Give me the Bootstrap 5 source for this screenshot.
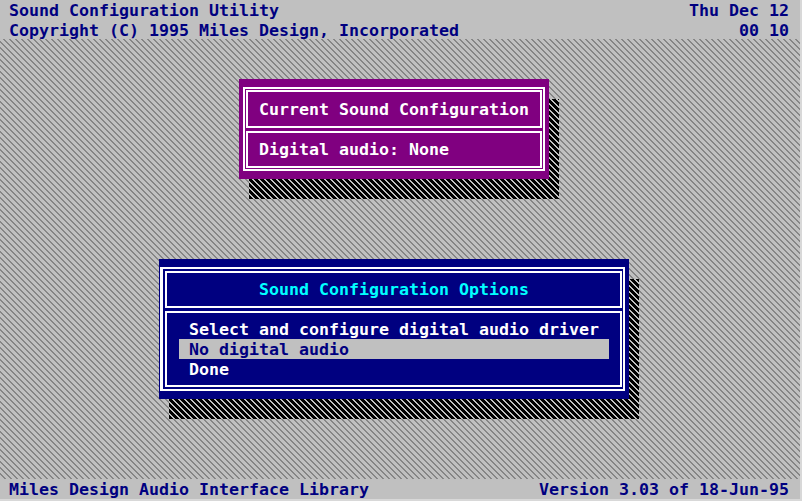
<!DOCTYPE html>
<html lang="en">
<head>
<meta charset="utf-8">
<title>Sound Configuration Utility</title>
<link rel="stylesheet" href="https://cdn.jsdelivr.net/npm/bootstrap@5.3.0/dist/css/bootstrap.min.css">
<style>
html,body{height:100%;margin:0;overflow:hidden}
body{background:#d8d8d8;font:bold 16.61px/20px "DejaVu Sans Mono",monospace;color:#000080}
.dos-screen{width:800px;height:499px}
.dos-bar{background:#c0c0c0;padding:1px 11px 0 9px}
.dos-head{height:39px}
.dos-foot{height:20px}
.dos-desk{height:440px;padding:40px 0 0;isolation:isolate;background:repeating-linear-gradient(45deg,#c0c0c0 0 3.18px,#868686 3.18px 4.243px)}
.dos-win{position:relative;padding:8px 4px;color:#fff}
.dos-win::after{content:"";position:absolute;z-index:-1;left:10px;right:-10px;top:20px;bottom:-20px;background:repeating-linear-gradient(45deg,#000 0 3.18px,#c0c0c0 3.18px 4.243px)}
.dos-purple{background:#800080;width:310px;height:100px;margin-left:239px}
.dos-blue{background:#000080;width:470px;height:140px;margin:80px 0 0 159px;padding-left:1px}
.dos-frame{border:2px solid #fff;padding:1px;height:100%;gap:3px}
.dos-blue .dos-frame{border-left-width:3px;padding:2px 1px 2px 2px}
.dos-panel{border:2px solid #fff;padding:8px 11px 6px;height:38px;white-space:nowrap}
.dos-panel+.dos-panel{height:37px;padding-top:7px}
.dos-blue .dos-panel{padding:7px 11px 0 12px;height:37px}
.dos-blue .dos-menu{height:76px;padding-top:6px}
.dos-title{color:#0ff;text-align:center}
.dos-item{padding:1px 0 0 10px;height:20px}
.dos-sel{background:#c0c0c0;color:#000080}
</style>
</head>
<body>
<div class="dos-screen d-flex flex-column">
  <div class="dos-bar dos-head">
    <div class="d-flex justify-content-between"><span>Sound Configuration Utility</span><span>Thu Dec 12</span></div>
    <div class="d-flex justify-content-between"><span>Copyright (C) 1995 Miles Design, Incorporated</span><span>00 10</span></div>
  </div>
  <div class="dos-desk">
    <div class="dos-win dos-purple">
      <div class="dos-frame d-flex flex-column">
        <div class="dos-panel">Current Sound Configuration</div>
        <div class="dos-panel">Digital audio: None</div>
      </div>
    </div>
    <div class="dos-win dos-blue">
      <div class="dos-frame d-flex flex-column">
        <div class="dos-panel dos-title">Sound Configuration Options</div>
        <div class="dos-panel dos-menu">
          <div class="dos-item">Select and configure digital audio driver</div>
          <div class="dos-item dos-sel">No digital audio</div>
          <div class="dos-item">Done</div>
        </div>
      </div>
    </div>
  </div>
  <div class="dos-bar dos-foot d-flex justify-content-between"><span>Miles Design Audio Interface Library</span><span>Version 3.03 of 18-Jun-95</span></div>
</div>
<script src="https://cdn.jsdelivr.net/npm/bootstrap@5.3.0/dist/js/bootstrap.bundle.min.js"></script>
</body>
</html>
